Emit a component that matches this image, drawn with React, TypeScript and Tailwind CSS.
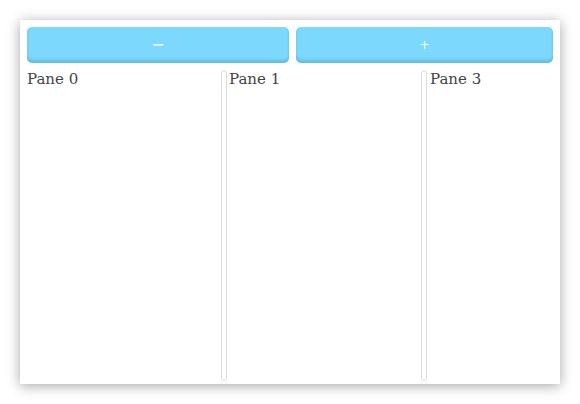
export default function App() {
  const panes = ["Pane 0", "Pane 1", "Pane 3"];
  return (
    <div className="w-[580px] h-[404px] bg-white p-5">
      <div className="w-[540px] h-[364px] bg-white shadow-[0_2px_12px_rgba(0,0,0,0.35)] p-[7px] pb-[3px] flex flex-col gap-[6px]">
        {/* Buttons */}
        <div className="flex gap-[7px] h-[36px] shrink-0">
          <button className="w-[262px] rounded-[5px] bg-[#7dd8fd] shadow-[inset_0_-3px_3px_rgba(0,60,100,0.18)] text-white text-[16px] leading-none font-['DejaVu_Sans',sans-serif] flex items-center justify-center">
            −
          </button>
          <button className="flex-1 rounded-[5px] bg-[#7dd8fd] shadow-[inset_0_-3px_3px_rgba(0,60,100,0.18)] text-white text-[12px] font-['DejaVu_Sans',sans-serif] flex items-center justify-center">
            +
          </button>
        </div>

        {/* Panes */}
        <div className="flex flex-1 font-['DejaVu_Serif',serif] text-[15px] text-[#444]">
          <div className="w-[194px] leading-[20px]">{panes[0]}</div>
          <div className="w-[6px] mt-[1px] rounded-[3px] border border-[#dcdcdc] bg-white" />
          <div className="w-[194px] pl-[2px] leading-[20px]">{panes[1]}</div>
          <div className="w-[6px] mt-[1px] rounded-[3px] border border-[#dcdcdc] bg-white" />
          <div className="flex-1 pl-[3px] leading-[20px]">{panes[2]}</div>
        </div>
      </div>
    </div>
  );
}
